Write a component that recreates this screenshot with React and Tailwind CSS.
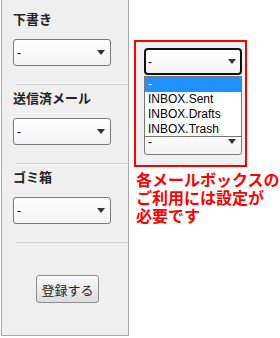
import React from "react";

const jp = { fontFamily: '"Noto Sans CJK JP", "Noto Sans", sans-serif' };
const lat = { fontFamily: '"Liberation Sans", Arial, sans-serif' };

function Arrow() {
  return (
    <svg width="8" height="5" viewBox="0 0 8 5" className="block">
      <path d="M0 0 L8 0 L4 5 Z" fill="#333" />
    </svg>
  );
}

function Select({ focused = false, className = "" }) {
  return (
    <div
      className={
        "flex items-center justify-between h-[27px] w-[98px] bg-gradient-to-b from-white to-[#f3f3f3] " +
        (focused
          ? "border-2 border-[#111] rounded-[4px] pl-[2px] pr-[4px] "
          : "border border-[#7a7a7a] rounded-[3px] pl-[3px] pr-[5px] ") +
        className
      }
      style={lat}
    >
      <span className="text-[12px] leading-none text-black">-</span>
      <Arrow />
    </div>
  );
}

function Section({ title, first }) {
  return (
    <div className={first ? "pt-[9px]" : "pt-[3px]"}>
      <div className="pl-[11px]">
        <div className="h-[20px] leading-[20px] text-[13px] font-bold text-[#222]" style={jp}>
          {title}
        </div>
        <Select className="mt-[10px]" />
      </div>
      <div className="mt-[18px] ml-[14px] h-px bg-[#d2d2d2]" />
    </div>
  );
}

export default function App() {
  return (
    <div className="w-[280px] h-[338px] bg-white flex">
      <div className="ml-[1px] w-[128px] h-[336px] border-x border-b border-[#aaaaaa] bg-[#efefef] flex flex-col">
        <Section title="下書き" first />
        <Section title="送信済メール" />
        <Section title="ゴミ箱" />
        <div className="flex pl-[34px] mt-[32px]">
          <button
            className="w-[63px] h-[28px] rounded-[3px] border border-[#8c8c8c] bg-gradient-to-b from-[#fafafa] to-[#dcdcdc] text-[13px] text-[#222] leading-none"
            style={jp}
          >
            登録する
          </button>
        </div>
      </div>
      <div className="ml-[5px] pt-[40px] flex flex-col">
        <div className="w-[113px] h-[127px] border-2 border-[#ff0000] bg-[#f0f0f0] relative pl-[8px] pt-[6px]">
          <Select focused />
          <Select className="mt-[53px]" />
          <div
            className="absolute left-[8px] top-[34px] w-[98px] border border-[#767676] bg-white text-[12px] text-black"
            style={lat}
          >
            <div className="h-[15px] leading-[15px] pl-[3px] bg-[#1e90ff] text-white">-</div>
            <div className="h-[15px] leading-[15px] pl-[3px]">INBOX.Sent</div>
            <div className="h-[15px] leading-[15px] pl-[3px]">INBOX.Drafts</div>
            <div className="h-[14px] leading-[14px] pl-[3px]">INBOX.Trash</div>
          </div>
        </div>
        <div
          className="mt-[3px] ml-[2px] text-[16px] font-bold text-[#ff0000] whitespace-nowrap flex flex-col"
          style={jp}
        >
          <div className="h-[18px] leading-[18px]">各メールボックスの</div>
          <div className="h-[18px] leading-[18px]">ご利用には設定が</div>
          <div className="h-[18px] leading-[18px]">必要です</div>
        </div>
      </div>
    </div>
  );
}
